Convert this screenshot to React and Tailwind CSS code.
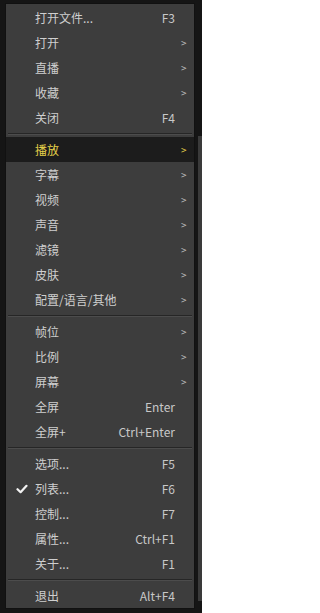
import React from "react";

const sections = [
  [
    { label: "打开文件...", key: "F3" },
    { label: "打开", sub: true },
    { label: "直播", sub: true },
    { label: "收藏", sub: true },
    { label: "关闭", key: "F4" },
  ],
  [
    { label: "播放", sub: true, active: true },
    { label: "字幕", sub: true },
    { label: "视频", sub: true },
    { label: "声音", sub: true },
    { label: "滤镜", sub: true },
    { label: "皮肤", sub: true },
    { label: "配置/语言/其他", sub: true },
  ],
  [
    { label: "帧位", sub: true },
    { label: "比例", sub: true },
    { label: "屏幕", sub: true },
    { label: "全屏", key: "Enter" },
    { label: "全屏+", key: "Ctrl+Enter" },
  ],
  [
    { label: "选项...", key: "F5" },
    { label: "列表...", key: "F6", checked: true },
    { label: "控制...", key: "F7" },
    { label: "属性...", key: "Ctrl+F1" },
    { label: "关于...", key: "F1" },
  ],
  [{ label: "退出", key: "Alt+F4" }],
];

function Check() {
  return (
    <svg width="12" height="10" viewBox="0 0 12 10">
      <path d="M1.5 5.2 L4.6 8.2 L10.5 1.8" fill="none" stroke="#f2f2f2" strokeWidth="2.2" strokeLinecap="round" strokeLinejoin="round" />
    </svg>
  );
}

function Row({ item }) {
  return (
    <div
      className={
        "flex h-[25px] items-center leading-[16px] " +
        (item.active ? "bg-[#1c1c1c] text-[#e6d24a]" : "text-[#cfcfcf]")
      }
    >
      <div className="flex w-[29px] shrink-0 justify-center pl-[2px]">{item.checked && <Check />}</div>
      <div className="min-w-0 flex-1 whitespace-nowrap">{item.label}</div>
      <div className="shrink-0 whitespace-nowrap text-right text-[#c8c8c8]">{item.key}</div>
      <div className={"w-[19px] shrink-0 pl-[6px] text-[10px] " + (item.active ? "text-[#e6d24a]" : "text-[#bdbdbd]")}>
        {item.sub ? ">" : ""}
      </div>
    </div>
  );
}

function Separator() {
  return (
    <div className="flex h-[7px] flex-col justify-center px-[2px]">
      <div className="h-px bg-[#262626]" />
      <div className="h-px bg-[#4c4c4c]" />
    </div>
  );
}

export default function App() {
  return (
    <div
      className="flex h-[613px] w-[202px] bg-[#151515] pt-[3px] text-[12px]"
      style={{ fontFamily: '"Noto Sans CJK SC", "Noto Sans", "Liberation Sans", sans-serif' }}
    >
      <div className="ml-[5px] h-[606px] w-[190px] shrink-0 border border-[#111] bg-[#3d3d3d] pt-px">
        {sections.map((items, i) => (
          <div key={i}>
            {i > 0 && <Separator />}
            {items.map(item => (
              <Row key={item.label} item={item} />
            ))}
          </div>
        ))}
      </div>
      <div className="flex flex-1 flex-col">
        <div className="h-[133px]" />
        <div className="ml-[3px] h-[465px] bg-[#3a3a3a]" />
      </div>
    </div>
  );
}
